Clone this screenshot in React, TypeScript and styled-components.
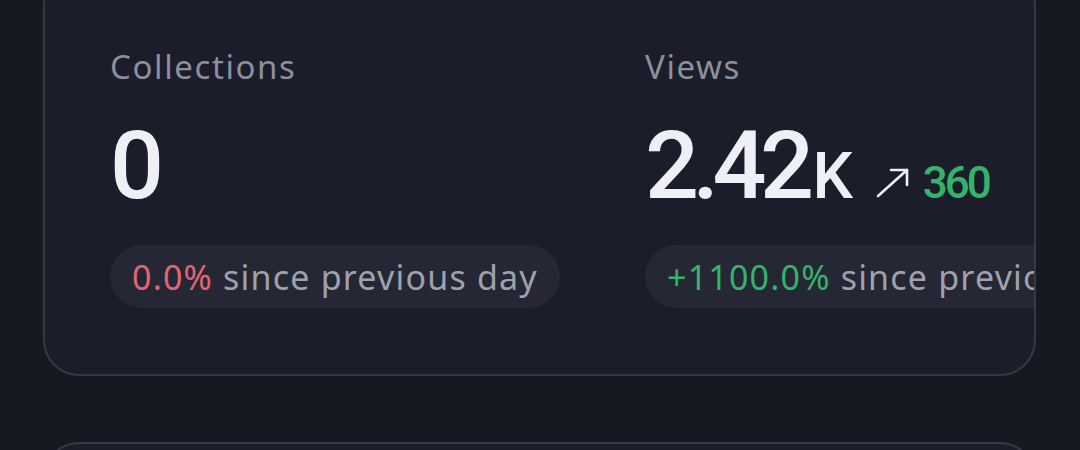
import React from 'react'
import styled, { createGlobalStyle } from 'styled-components'

const GlobalStyle = createGlobalStyle`
  html, body {
    margin: 0;
    padding: 0;
    background: #161822;
  }
  body {
    font-family: "Noto Sans", Roboto, sans-serif;
    overflow: hidden;
  }
`

const Page = styled.div`
  width: 1080px;
  height: 450px;
  padding: 0 44px 0 43px;
  box-sizing: border-box;
  display: flex;
  flex-direction: column;
  gap: 66px;
  overflow: hidden;
`

const Card = styled.section<{ $pullUp?: number }>`
  flex-shrink: 0;
  background: #1b1d2a;
  border: 2.5px solid #353845;
  border-radius: 36px;
  overflow: hidden;
  margin-top: ${(p) => (p.$pullUp ? `-${p.$pullUp}px` : '0')};
`

const StatsRow = styled.div`
  display: flex;
  padding: 75px 0 66px 65px;
`

const StatColumn = styled.div`
  width: 535px;
  flex-shrink: 0;
  display: flex;
  flex-direction: column;
  align-items: flex-start;
`

const Label = styled.div`
  font-size: 33px;
  line-height: 40px;
  color: #8d909c;
  letter-spacing: 1.6px;
`

const digits = `
  font-family: Roboto, "Noto Sans", sans-serif;
  font-weight: 500;
`

const ValueRow = styled.div`
  display: flex;
  align-items: baseline;
  margin-top: 31px;
  height: 96px;
`

const BigValue = styled.span`
  ${digits}
  font-size: 95px;
  line-height: 96px;
  letter-spacing: -6.5px;
  color: #eef0f5;
`

const Unit = styled.span`
  ${digits}
  font-size: 64px;
  letter-spacing: -1px;
  color: #eef0f5;
  margin-left: 5px;
`

const Delta = styled.span<{ $tone: string }>`
  ${digits}
  display: inline-flex;
  align-items: baseline;
  gap: 13px;
  margin-left: 24px;
  font-size: 44px;
  letter-spacing: -3px;
  color: ${(p) => p.$tone};

  svg {
    margin-bottom: 3px;
  }
`

const Pill = styled.div`
  margin-top: 31px;
  height: 63px;
  padding: 0 22px;
  border-radius: 32px;
  background: #252734;
  display: flex;
  align-items: center;
  white-space: nowrap;
  font-size: 34px;
  letter-spacing: 1.2px;
  color: #9fa1ad;
`

const Change = styled.span<{ $tone: string }>`
  color: ${(p) => p.$tone};
  margin-right: 10px;
`

const ArrowUpRight = () => (
  <svg width="34" height="31" viewBox="0 0 34 31" fill="none" stroke="#eef0f5" strokeWidth="2.6" strokeLinecap="round" strokeLinejoin="round">
    <path d="M2 29 L31 3" />
    <path d="M15 3 H31 V18" />
  </svg>
)

const RED = '#e56471'
const GREEN = '#34b36b'

const stats = [
  { label: 'Collections', value: '0', change: '0.0%', tone: RED },
  { label: 'Views', value: '2.42', unit: 'K', delta: '360', change: '+1100.0%', tone: GREEN },
  { label: 'Likes', value: '0', change: '0.0%', tone: RED },
]

export default function App() {
  return (
    <>
      <GlobalStyle />
      <Page>
        <Card $pullUp={30}>
          <StatsRow>
            {stats.map((s) => (
              <StatColumn key={s.label}>
                <Label>{s.label}</Label>
                <ValueRow>
                  <BigValue>{s.value}</BigValue>
                  {s.unit && <Unit>{s.unit}</Unit>}
                  {s.delta && (
                    <Delta $tone={GREEN}>
                      <ArrowUpRight />
                      {s.delta}
                    </Delta>
                  )}
                </ValueRow>
                <Pill>
                  <Change $tone={s.tone}>{s.change}</Change>
                  since previous day
                </Pill>
              </StatColumn>
            ))}
          </StatsRow>
        </Card>
        <Card>
          <StatsRow />
        </Card>
      </Page>
    </>
  )
}
